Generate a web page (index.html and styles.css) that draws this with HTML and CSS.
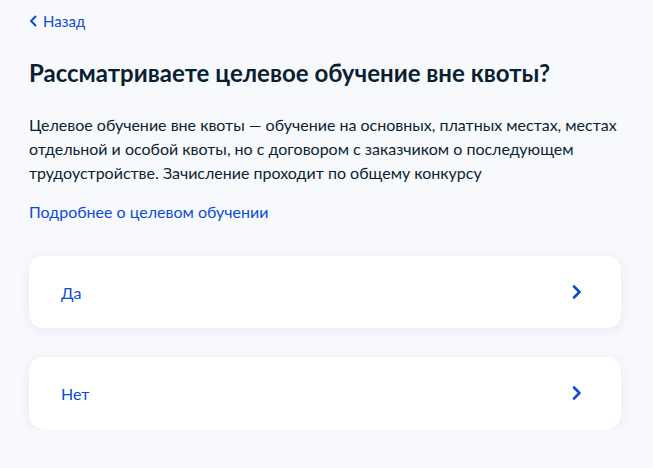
FILE: index.html
```html
<!DOCTYPE html>
<html lang="ru">
  <head>
    <meta charset="UTF-8" />
    <meta name="viewport" content="width=device-width, initial-scale=1.0" />
    <title>Целевое обучение</title>
    <link rel="stylesheet" href="styles.css">
  </head>
  <body>
    <main class="page">
      <a class="back-link" href="#">
        <svg class="back-icon" viewBox="0 0 8 12" width="8" height="12"><path d="M6.5 1.5 2 6l4.5 4.5" fill="none" stroke="currentColor" stroke-width="2" stroke-linecap="round" stroke-linejoin="round"/></svg>
        Назад
      </a>
      <h1>Рассматриваете целевое обучение вне квоты?</h1>
      <p class="lead">Целевое обучение вне квоты — обучение на основных, платных местах, местах отдельной и особой квоты, но с договором с заказчиком о последующем трудоустройстве. Зачисление проходит по общему конкурсу</p>
      <a class="more-link" href="#">Подробнее о целевом обучении</a>
      <div class="options">
        <a class="option" href="#">
          <span>Да</span>
          <svg class="chevron" viewBox="0 0 24 24" width="24" height="24"><path d="M9 6.5 14.5 12 9 17.5" fill="none" stroke="currentColor" stroke-width="2.6" stroke-linecap="round" stroke-linejoin="round"/></svg>
        </a>
        <a class="option" href="#">
          <span>Нет</span>
          <svg class="chevron" viewBox="0 0 24 24" width="24" height="24"><path d="M9 6.5 14.5 12 9 17.5" fill="none" stroke="currentColor" stroke-width="2.6" stroke-linecap="round" stroke-linejoin="round"/></svg>
        </a>
      </div>
    </main>
  </body>
</html>
```

FILE: styles.css
```css
body {
  font-family: Lato, "Noto Sans", sans-serif;
  background-color: #f8f9fd;
  color: #0b1f33;
  margin: 0;
  padding: 0;
}
a {
  text-decoration: none;
  color: #0d4cd3;
}
.page {
  padding: 11px 32px 0 29px;
}
.back-link {
  display: inline-flex;
  align-items: center;
  gap: 6px;
  font-size: 15px;
  line-height: 20px;
}
.back-icon {
  display: block;
}
h1 {
  font-size: 24px;
  line-height: 32px;
  font-weight: 700;
  margin: 26px 0 24px;
}
.lead {
  font-size: 16px;
  line-height: 24px;
  margin: 0 0 15px;
}
.more-link {
  display: inline-block;
  font-size: 16px;
  line-height: 24px;
}
.options {
  display: flex;
  flex-direction: column;
  gap: 29px;
  margin-top: 32px;
}
.option {
  display: flex;
  align-items: center;
  justify-content: space-between;
  height: 72px;
  padding: 0 32px;
  background: white;
  border-radius: 14px;
  box-shadow: 0 2px 12px rgba(0, 32, 130, 0.07);
  font-size: 16px;
}
.chevron {
  display: block;
}
```
